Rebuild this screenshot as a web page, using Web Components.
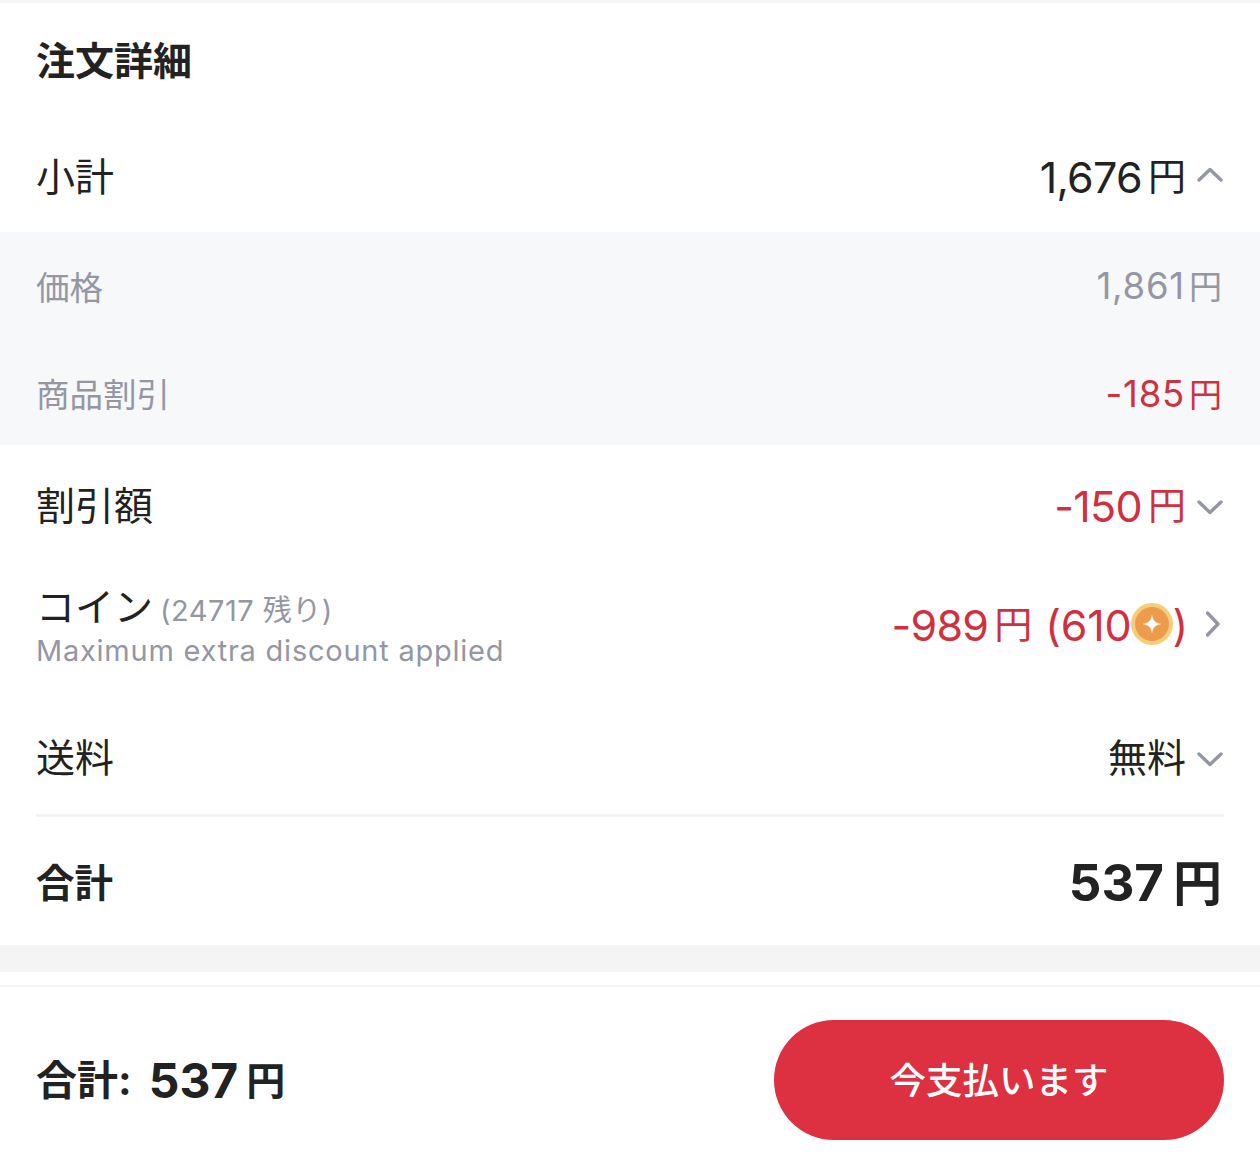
<!DOCTYPE html>
<html lang="ja"><head><meta charset="utf-8"><style>
html,body{margin:0;background:#fff}
body{width:1260px;height:1176px;overflow:hidden;font-family:Inter,"Noto Sans CJK JP",sans-serif;color:#222}
</style></head><body>
<order-page></order-page>
<template id="t-yen"><style>
:host{display:inline-flex;align-items:center}
.n{font-size:var(--ns,43px);letter-spacing:var(--nl,-.7px);transform:translateY(var(--nt,3px))}
.y{font-size:var(--ys,38px);margin-left:var(--yg,6px);transform:translateY(var(--yt,0))}
</style><span class="n"><slot></slot></span><span class="y">円</span></template>
<template id="t-row"><style>
:host{display:flex;align-items:center;justify-content:space-between;box-sizing:border-box;padding:0 36px 7px 36px;height:var(--h,110px);font-size:39px;color:#222}
:host([sub]){font-size:33.5px;color:#9497a3;padding:0 38px 0 36px}
.v{display:flex;align-items:center;color:var(--vc,inherit)}
</style><div><slot name="l"></slot></div><div class="v"><slot name="v"></slot><slot name="i"></slot></div></template>
<template id="t-chev"><style>
:host{display:inline-flex;width:28px;height:28px;margin-left:10px}
:host([dir=up]){margin-top:2px}
:host([dir=down]){margin-top:8px}
svg{width:28px;height:28px;fill:none;stroke:#9497a3;stroke-width:3.4;stroke-linecap:round;stroke-linejoin:round}
</style><svg viewBox="0 0 28 28"><path id="p"/></svg></template>
<template id="t-page"><style>
:host{display:block}
.top{height:3px;background:#f5f5f5}
h2{margin:0;height:119px;box-sizing:border-box;padding:0 36px 9px;display:flex;align-items:center;font-size:39px;font-weight:700;color:#222}
.subs{background:#f7f8fa;height:213px;display:flex;flex-direction:column}
.red{--vc:#d0303f}
.small{font-size:29px;color:#9497a3;letter-spacing:.5px}
.note{font-size:29px;color:#9497a3;letter-spacing:.76px;line-height:36px;display:block}
.cl{display:flex;align-items:baseline;gap:7px;line-height:44px}
.coin{width:42px;height:42px;margin:0 0 0 -1px;flex:none;transform:translateY(2px)}
.d{font-size:43px;letter-spacing:-.2px;transform:translateY(3px)}
.wrap{padding:0 36px}
.rule{height:3px;background:#f3f3f4}
.band{height:27px;background:#f4f4f4}
.gap{height:13px}
.foot{border-top:2px solid #f4f4f4;height:189px;box-sizing:border-box;display:flex;justify-content:space-between;align-items:flex-start;padding:33px 36px 0 36px}
.ft{font-size:41px;font-weight:700;color:#222;line-height:120px;height:120px;display:flex;gap:17px;align-items:center}
button{width:450px;height:120px;border:0;border-radius:60px;background:#dd3040;color:#fff;font:500 36.5px Inter,"Noto Sans CJK JP",sans-serif;letter-spacing:0;padding:0 0 4px}
.tot{font-weight:700;font-size:38.5px}
</style>
<div class="top"></div>
<h2>注文詳細</h2>
<x-row><span slot="l">小計</span><x-yen slot="v">1,676</x-yen><x-chev slot="i" dir="up"></x-chev></x-row>
<div class="subs">
<x-row sub style="--h:106px;--ns:36.5px;--ys:33px;--yg:4px;--nl:.8px;--nt:1px;--yt:0px"><span slot="l">価格</span><x-yen slot="v">1,861</x-yen></x-row>
<x-row sub style="--h:107px;--ns:36.5px;--ys:33px;--yg:4px;--nl:.8px;--nt:2px;--yt:1px;--vc:#d0303f;padding-top:1px"><span slot="l">商品割引</span><x-yen slot="v">-185</x-yen></x-row>
</div>
<x-row class="red" style="--h:122px"><span slot="l">割引額</span><x-yen slot="v">-150</x-yen><x-chev slot="i" dir="down"></x-chev></x-row>
<x-row class="red" style="--h:135px;align-items:flex-start;padding-top:18px">
<span slot="l"><span class="cl"><span>コイン</span><span class="small">(24717 残り)</span></span><span class="note">Maximum extra discount applied</span></span>
<span slot="v" style="display:flex;align-items:center;margin-top:9px"><x-yen>-989</x-yen><span class="d" style="margin-left:13px">(610</span><svg class="coin" viewBox="0 0 42 42"><circle cx="21" cy="21" r="21" fill="#f3cf7c"/><circle cx="21" cy="21" r="17" fill="#ee9c4b"/><path d="M21 11.500c.9 6 3.500 8.600 9.500 9.500-6 .9-8.600 3.500-9.500 9.500-.9-6-3.500-8.600-9.500-9.500 6-.9 8.600-3.500 9.500-9.500z" fill="#fff"/></svg><span class="d">)</span></span><x-chev slot="i" dir="right" style="margin-top:13px;margin-left:8px"></x-chev></x-row>
<x-row style="--h:112px"><span slot="l">送料</span><span slot="v">無料</span><x-chev slot="i" dir="down"></x-chev></x-row>
<div class="wrap"><div class="rule"></div></div>
<x-row style="--h:128px;--ns:51px;--ys:49px;--yg:9px;--nl:0px;--nt:3px;font-weight:700;padding-right:38px;padding-bottom:3px"><span slot="l" class="tot">合計</span><x-yen slot="v">537</x-yen></x-row>
<div class="band"></div><div class="gap"></div>
<div class="foot"><div class="ft"><span>合計:</span><x-yen style="--ns:48px;--ys:39px;--yg:8px;--nl:0px;--nt:1px;--yt:1px">537</x-yen></div><button>今支払います</button></div>
</template>
<script>
const tpl=id=>document.getElementById(id).content.cloneNode(true);
class XYen extends HTMLElement{constructor(){super();this.attachShadow({mode:'open'}).append(tpl('t-yen'))}}
class XRow extends HTMLElement{constructor(){super();this.attachShadow({mode:'open'}).append(tpl('t-row'))}}
class XChev extends HTMLElement{constructor(){super();this.attachShadow({mode:'open'}).append(tpl('t-chev'))}
connectedCallback(){const d={up:'M3 19 14 8.500 25 19',down:'M3 9 14 19.500 25 9',right:'M11.500 3 22 14 11.500 25'}[this.getAttribute('dir')];this.shadowRoot.getElementById('p').setAttribute('d',d)}}
class OrderPage extends HTMLElement{constructor(){super();this.attachShadow({mode:'open'}).append(tpl('t-page'))}}
customElements.define('x-yen',XYen);customElements.define('x-row',XRow);customElements.define('x-chev',XChev);customElements.define('order-page',OrderPage);
</script>
</body></html>
